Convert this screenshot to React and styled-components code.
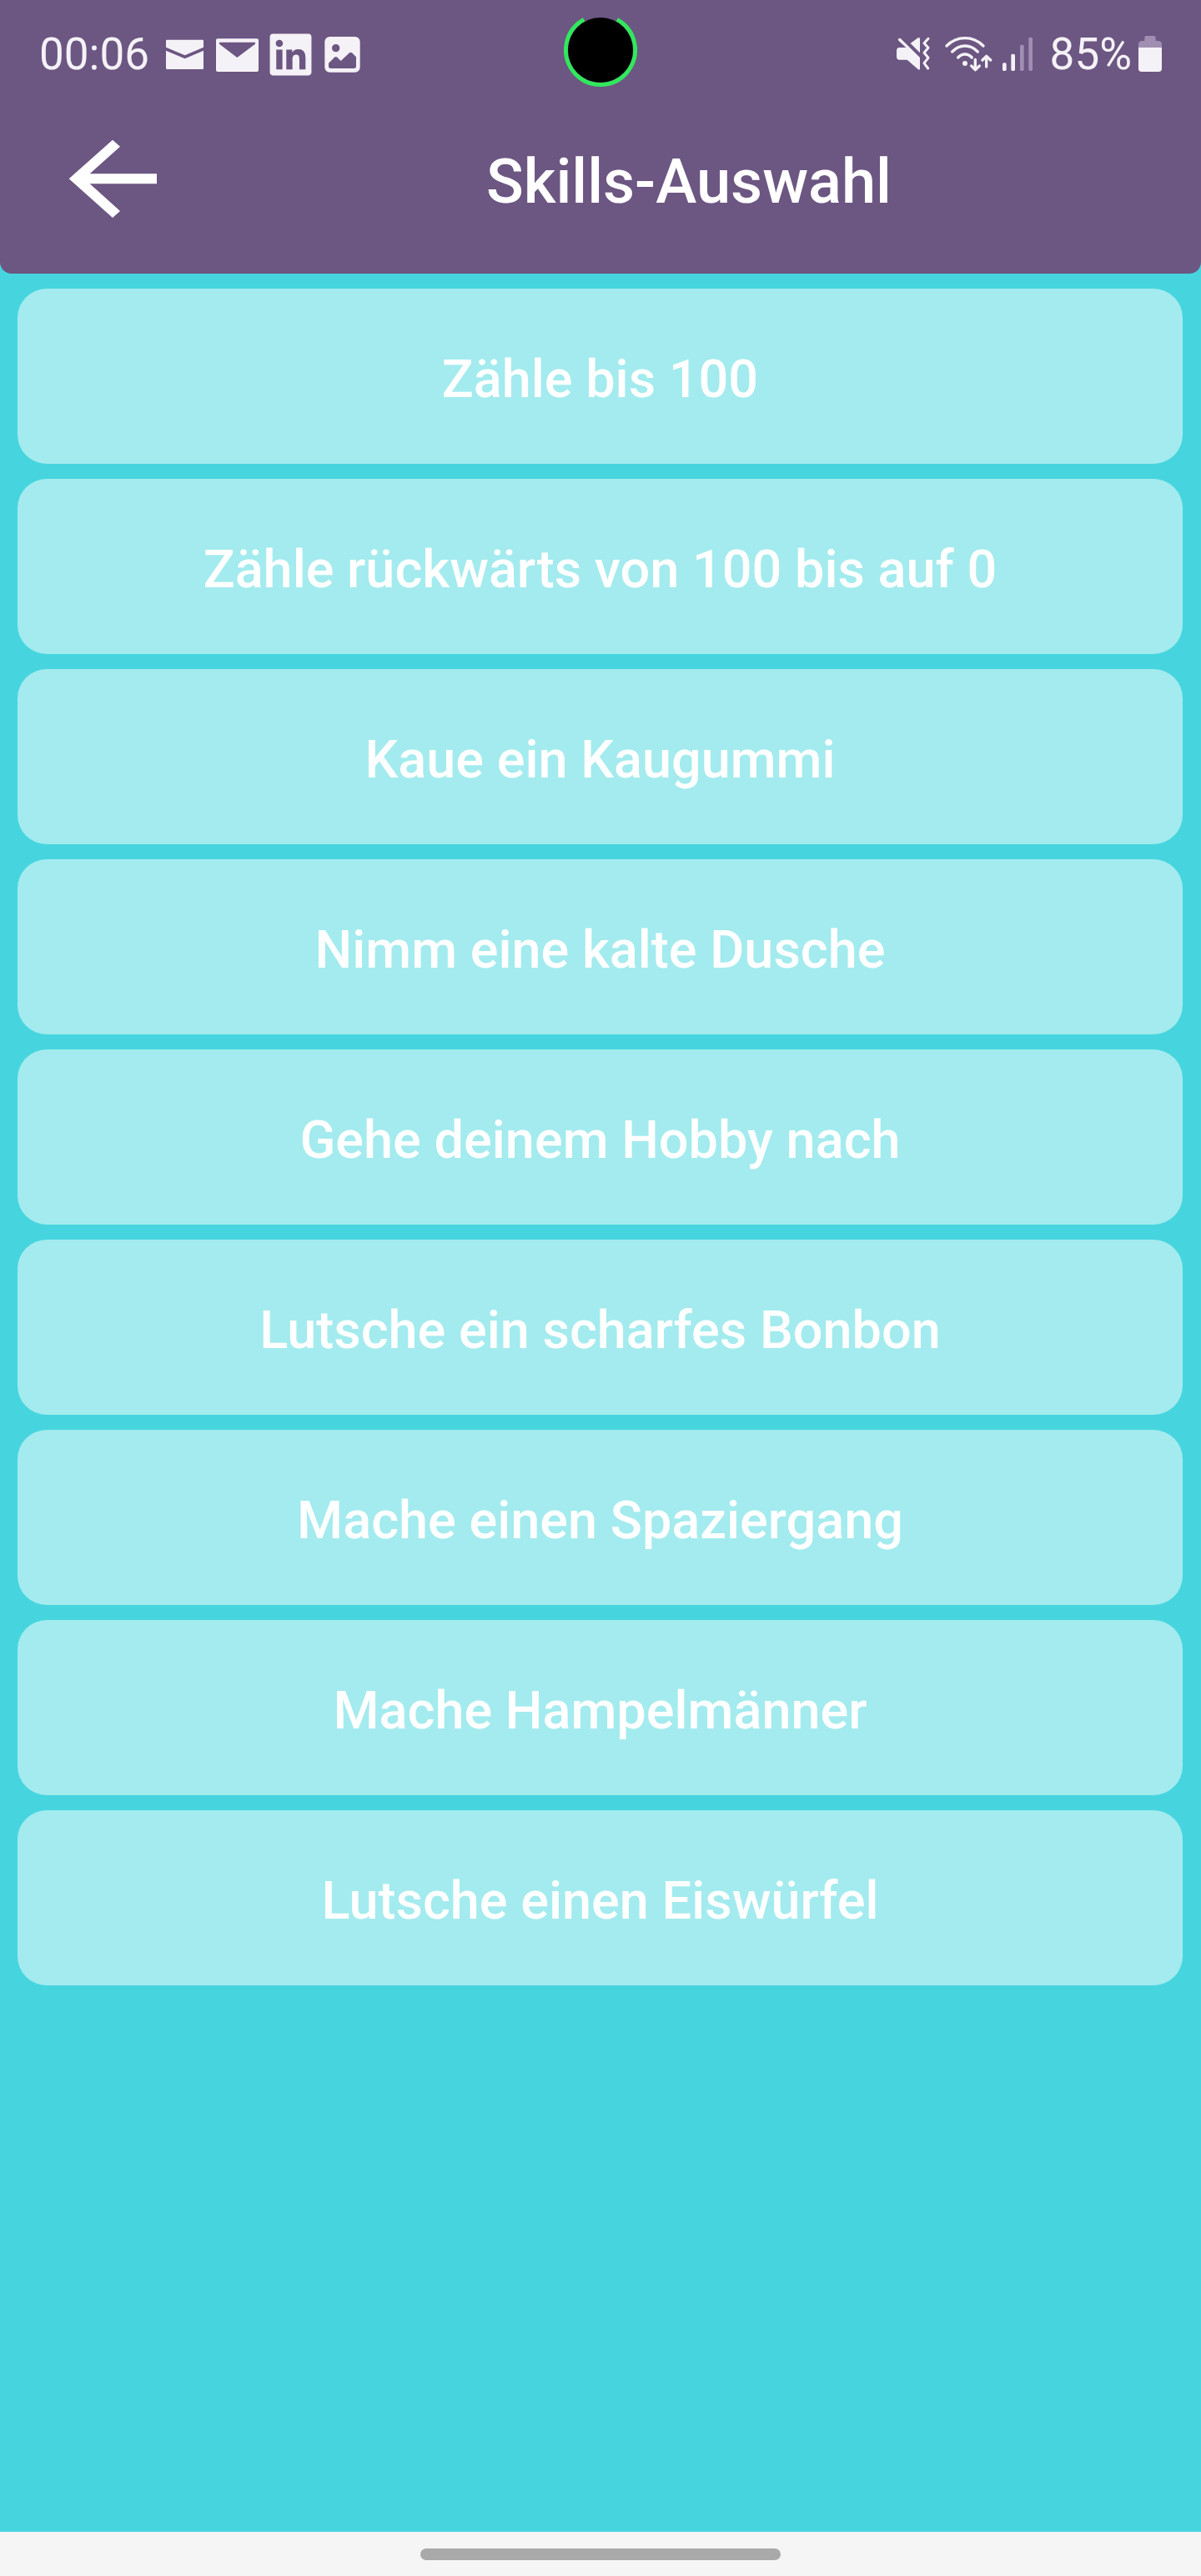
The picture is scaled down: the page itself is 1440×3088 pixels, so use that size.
import React from "react";
import styled, { createGlobalStyle } from "styled-components";
import { FaLinkedin } from "react-icons/fa";

const color = {
  purple: "#6c5682",
  cyan: "#46d5df",
  card: "#a3ebee",
  status: "#f5f2f7",
  statusDim: "#a08fb2",
  ring: "#31e85c",
  navBar: "#f5f5f5",
  navPill: "#a9a9a9",
};

const GlobalStyle = createGlobalStyle`
  *, *::before, *::after { box-sizing: border-box; }
  body {
    margin: 0;
    background: ${color.cyan};
    font-family: Roboto, "Liberation Sans", sans-serif;
  }
`;

const Screen = styled.div`
  display: flex;
  flex-direction: column;
  min-height: 100vh;
  background: ${color.cyan};
`;

const Header = styled.header`
  position: relative;
  background: ${color.purple};
  border-radius: 0 0 14px 14px;
`;

const StatusBar = styled.div`
  display: flex;
  align-items: center;
  justify-content: space-between;
  padding: 23px 47px 0;
  color: ${color.status};
`;

const StatusGroup = styled.div`
  display: flex;
  align-items: center;
  gap: ${(p) => p.$gap}px;
`;

const StatusText = styled.span`
  font-size: 53px;
  line-height: 84px;
`;

const StatusIcon = styled.svg`
  display: block;
  width: ${(p) => p.$width}px;
  height: 60px;
  fill: currentColor;
`;

const LinkedInIcon = styled(FaLinkedin)`
  display: block;
  width: 51px;
  height: 57px;
`;

const Camera = styled.svg`
  position: absolute;
  top: 12px;
  left: 50%;
  width: 96px;
  height: 96px;
  transform: translateX(-50%);
`;

const AppBar = styled.div`
  display: flex;
  align-items: center;
  height: 221px;
`;

const BackButton = styled.button`
  display: flex;
  align-items: center;
  width: 212px;
  height: 120px;
  padding: 0 0 0 76px;
  border: 0;
  background: none;
  color: #fff;
  cursor: pointer;

  svg {
    width: 120px;
    height: 120px;
    fill: currentColor;
  }
`;

const Title = styled.h1`
  flex: 1;
  margin: 0;
  color: #fff;
  font-size: 74px;
  font-weight: 500;
  line-height: 88px;
  text-align: center;
`;

const SkillList = styled.ul`
  flex: 1;
  display: flex;
  flex-direction: column;
  gap: 18px;
  margin: 0;
  padding: 18px 22px 18px 21px;
  list-style: none;
`;

const SkillButton = styled.button`
  display: block;
  width: 100%;
  height: 210px;
  padding: 8px 35px 0;
  border: 0;
  border-radius: 35px;
  background: ${color.card};
  color: #fff;
  font-family: inherit;
  font-size: 63px;
  font-weight: 500;
  line-height: 74px;
  text-align: center;
  cursor: pointer;
`;

const GestureBar = styled.footer`
  display: flex;
  justify-content: center;
  padding: 20px 0 19px;
  background: ${color.navBar};
`;

const GesturePill = styled.div`
  width: 30%;
  height: 14px;
  border-radius: 7px;
  background: ${color.navPill};
`;

const skills = [
  "Zähle bis 100",
  "Zähle rückwärts von 100 bis auf 0",
  "Kaue ein Kaugummi",
  "Nimm eine kalte Dusche",
  "Gehe deinem Hobby nach",
  "Lutsche ein scharfes Bonbon",
  "Mache einen Spaziergang",
  "Mache Hampelmänner",
  "Lutsche einen Eiswürfel",
];

function OpenMailIcon() {
  return (
    <StatusIcon $width={51} viewBox="588 105 153 180" aria-hidden="true">
      <path d="M604 143H731a4 4 0 0 1 4 4V170L668 199L600 170V147a4 4 0 0 1 4-4Z" />
      <path d="M600 182L668 211L735 182V245a4 4 0 0 1-4 4H604a4 4 0 0 1-4-4Z" />
    </StatusIcon>
  );
}

function MailIcon() {
  return (
    <StatusIcon $width={51} viewBox="780 105 153 180" aria-hidden="true">
      <path
        fillRule="evenodd"
        d="M786 139H927a6 6 0 0 1 6 6V252a6 6 0 0 1-6 6H786a6 6 0 0 1-6-6V145a6 6 0 0 1 6-6ZM792 152V158L856 207L921 158V152Z"
      />
    </StatusIcon>
  );
}

function PictureIcon() {
  return (
    <StatusIcon $width={51} viewBox="1164 105 153 180" aria-hidden="true">
      <path
        fillRule="evenodd"
        d="M1189 132H1280a18 18 0 0 1 18 18V242a18 18 0 0 1-18 18H1189a18 18 0 0 1-18-18V150a18 18 0 0 1 18-18ZM1211 159a14 14 0 1 0 0 28a14 14 0 1 0 0-28ZM1185 227V238a8 8 0 0 0 8 8H1276a8 8 0 0 0 8-8V205L1269 190Q1265 186 1260 190L1229 219L1216 206Q1211 202 1206 206Z"
      />
    </StatusIcon>
  );
}

function MutedIcon() {
  return (
    <StatusIcon $width={49} viewBox="99 105 147 180" role="img" aria-label="Vibration">
      <path d="M155 156L180 137Q189 132 189 141V190Z" />
      <path d="M120 139L189 207V246Q189 254 182 249L143 215H116Q105 215 105 204V183Q105 171 116 171H139L112 146Q109 142 112 139Q116 135 120 139Z" />
      <path
        d="M219 139L204 155L219 172L204 190L219 208L204 227L218 246"
        fill="none"
        stroke="currentColor"
        strokeWidth="9"
        strokeLinecap="round"
        strokeLinejoin="round"
      />
    </StatusIcon>
  );
}

function WifiIcon() {
  return (
    <StatusIcon $width={58} viewBox="276 105 174 180" role="img" aria-label="WLAN">
      <circle cx="351" cy="228" r="9" />
      <g fill="none" stroke="currentColor" strokeWidth="10" strokeLinecap="round" strokeLinejoin="round">
        <path d="M285 165Q313 137 351 137T417 165" />
        <path d="M305 186Q325 165 351 165T397 186" />
        <path d="M326 207Q337 195 351 195T376 207" />
        <path d="M388 214V250M374 237L388 251L403 237" />
        <path d="M428 240V203M414 216L428 202L443 216" />
      </g>
    </StatusIcon>
  );
}

function SignalIcon() {
  return (
    <StatusIcon $width={49} viewBox="480 105 147 180" role="img" aria-label="Mobilfunk">
      <rect x="486" y="226" width="14" height="29" rx="5" />
      <rect x="517" y="194" width="14" height="61" rx="5" />
      <rect x="549" y="161" width="14" height="94" rx="5" fill={color.statusDim} />
      <rect x="580" y="134" width="14" height="121" rx="5" fill={color.statusDim} />
    </StatusIcon>
  );
}

function BatteryIcon() {
  return (
    <StatusIcon $width={28} viewBox="975 105 84 180" aria-hidden="true">
      <path
        fill={color.statusDim}
        d="M1003 129H1031Q1037 129 1037 135V147H1048Q1059 148 1059 160V171H975V160Q976 148 986 147H997V135Q997 129 1003 129Z"
      />
      <path d="M975 171H1059V247Q1059 258 1048 258H986Q975 258 975 247Z" />
    </StatusIcon>
  );
}

function CameraCutout() {
  return (
    <Camera viewBox="0 0 96 96" aria-hidden="true">
      <path
        d="M28.2 11.5A41.5 41.5 0 1 0 67.8 11.5"
        fill="none"
        stroke={color.ring}
        strokeWidth="5"
      />
      <circle cx="48" cy="48" r="39" fill="#000" />
    </Camera>
  );
}

export default function App() {
  return (
    <Screen>
      <GlobalStyle />
      <Header>
        <StatusBar>
          <StatusGroup $gap={16}>
            <StatusText>00:06</StatusText>
            <StatusGroup $gap={13}>
              <OpenMailIcon />
              <MailIcon />
              <LinkedInIcon aria-hidden="true" />
              <PictureIcon />
            </StatusGroup>
          </StatusGroup>
          <StatusGroup $gap={10}>
            <MutedIcon />
            <WifiIcon />
            <SignalIcon />
            <StatusGroup $gap={8}>
              <StatusText>85%</StatusText>
              <BatteryIcon />
            </StatusGroup>
          </StatusGroup>
        </StatusBar>
        <CameraCutout />
        <AppBar>
          <BackButton type="button" aria-label="Zurück">
            <svg viewBox="228 473 360 360" aria-hidden="true">
              <path d="M248 642L405 502L432 526L323 624H564V660H323L432 758L405 782Z" />
            </svg>
          </BackButton>
          <Title>Skills-Auswahl</Title>
        </AppBar>
      </Header>
      <SkillList>
        {skills.map((skill) => (
          <li key={skill}>
            <SkillButton type="button">{skill}</SkillButton>
          </li>
        ))}
      </SkillList>
      <GestureBar>
        <GesturePill />
      </GestureBar>
    </Screen>
  );
}
